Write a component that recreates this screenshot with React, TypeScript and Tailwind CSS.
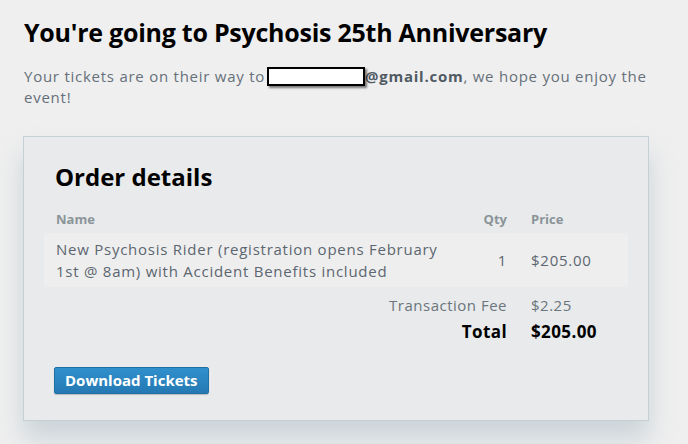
export default function App() {
  return (
    <div className="min-h-[444px] bg-[#efefef] px-6 pt-[17px] font-['Open_Sans',sans-serif]">
      <h1 className="text-[25px] font-bold leading-[30px] text-black tracking-[-0.25px]">
        You're going to Psychosis 25th Anniversary
      </h1>
      <p className="mt-[16px] text-[15px] leading-[21px] tracking-[0.75px] text-[#66707a]">
        Your tickets are on their way to
        <span className="ml-[2px] inline-block h-[19px] w-[98px] translate-y-[4px] border-2 border-black bg-white shadow-[2px_2px_2px_rgba(0,0,0,0.5)]" />
        <span className="font-bold text-[#4f5a63]">@gmail.com</span>, we hope you enjoy the
        <br />
        event!
      </p>

      <div className="mt-[28px] ml-[-1px] w-[626px] border border-[#c5d0d5] bg-[#e8eaeb] px-[20px] pb-[26px] pt-[25px] shadow-[0_18px_24px_rgba(160,180,190,0.45)]">
        <h2 className="ml-[11px] text-[24px] font-bold leading-[30px] text-black">Order details</h2>

        <div className="mt-[18px]">
          <div className="flex px-3 pb-[3px] text-[13px] font-bold text-[#8a9499]">
            <div className="flex-1">Name</div>
            <div className="w-[40px] text-right">Qty</div>
            <div className="w-[109px] pl-[24px]">Price</div>
          </div>
          <div className="flex items-center bg-[#eeeeee] px-3 py-[5px] text-[15px] leading-[22px] tracking-[0.75px] text-[#5c6670]">
            <div className="flex-1">
              New Psychosis Rider (registration opens February
              <br />
              1st @ 8am) with Accident Benefits included
            </div>
            <div className="w-[40px] text-right">1</div>
            <div className="w-[109px] pl-[24px]">$205.00</div>
          </div>
          <div className="mt-[7px] flex px-3 text-[15px] leading-[22px] tracking-[0.5px] text-[#6b757d]">
            <div className="flex-1 text-right">Transaction Fee</div>
            <div className="w-[109px] pl-[24px]">$2.25</div>
          </div>
          <div className="mt-[4px] flex px-3 text-[17px] font-bold leading-[24px] tracking-[0.4px] text-black">
            <div className="flex-1 text-right">Total</div>
            <div className="w-[109px] pl-[24px]">$205.00</div>
          </div>
        </div>

        <button className="ml-[10px] mt-[23px] rounded-[2px] border border-[#1f6fa3] bg-gradient-to-b from-[#3190cc] to-[#2479b3] px-[10px] py-[3px] text-[15px] font-bold leading-[19px] text-white shadow-[0_1px_1px_rgba(0,0,0,0.2)]">
          Download Tickets
        </button>
      </div>
    </div>
  );
}
